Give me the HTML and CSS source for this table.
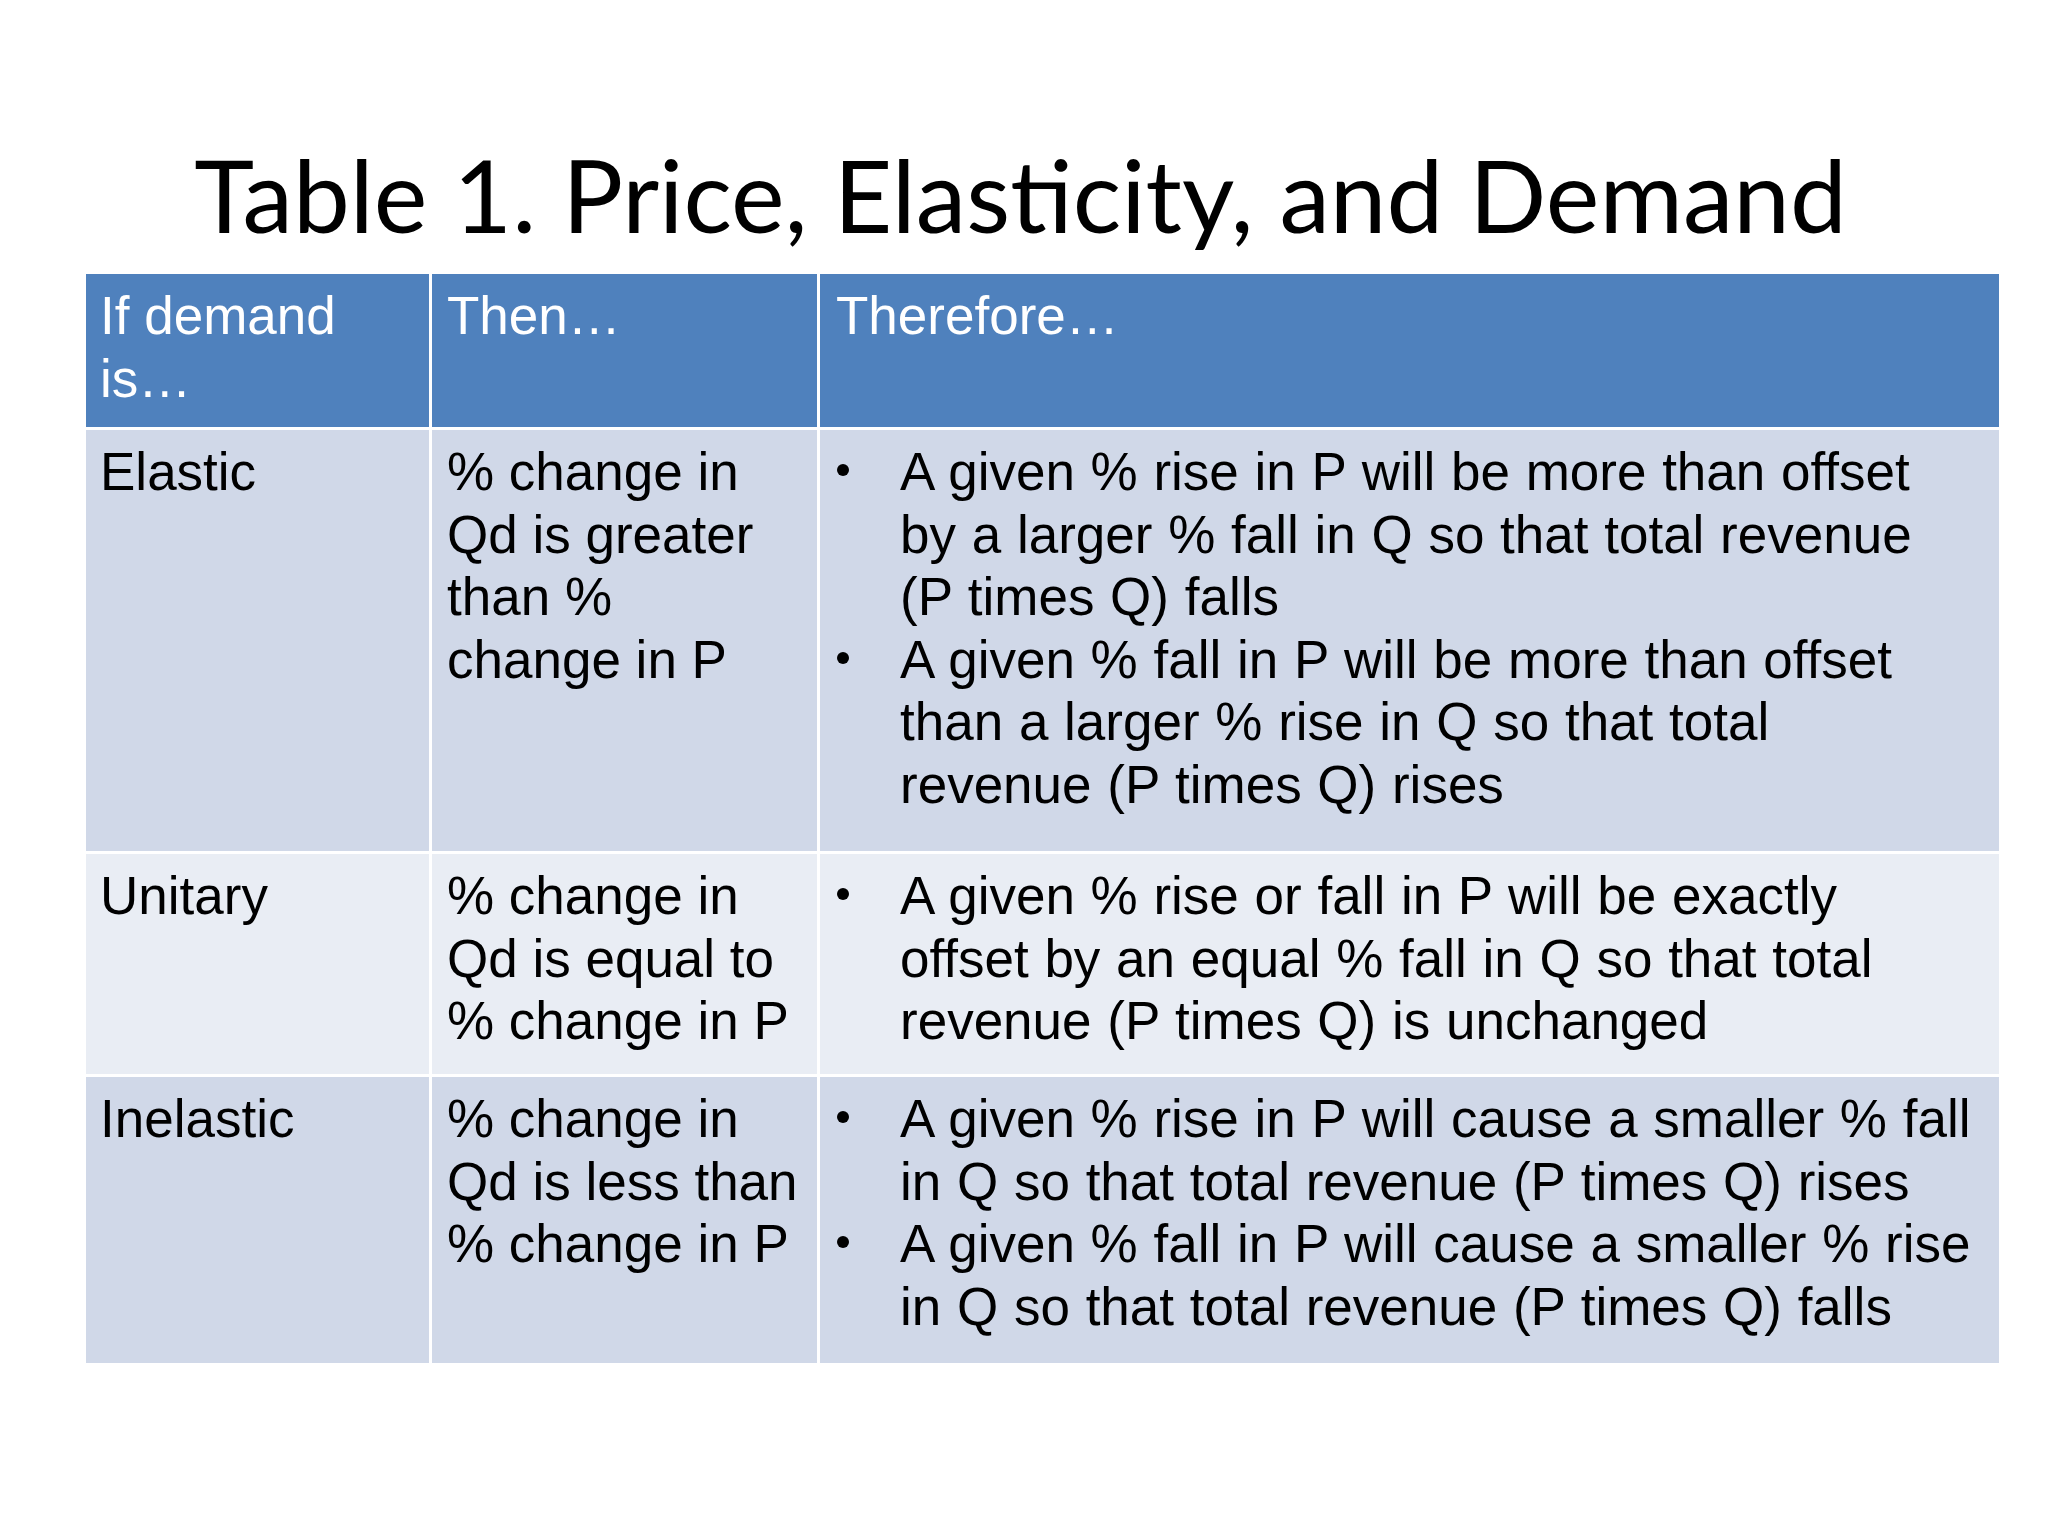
FILE: index.html
```html
<!DOCTYPE html>
<html lang="en">
<head>
<meta charset="utf-8">
<title>Table 1. Price, Elasticity, and Demand</title>
<link rel="stylesheet" href="styles.css">
</head>
<body>
<div class="slide">
  <h1 class="title">Table 1. Price, Elasticity, and Demand</h1>
  <div class="grid">
    <div class="cell head">If demand<br>is…</div>
    <div class="cell head c2">Then…</div>
    <div class="cell head c3">Therefore…</div>

    <div class="cell odd">Elastic</div>
    <div class="cell odd c2">% change in<br>Qd is greater<br>than %<br>change in P</div>
    <div class="cell odd c3">
      <ul class="bullets">
        <li>A given % rise in P will be more than offset<br>by a larger % fall in Q so that total revenue<br>(P times Q) falls</li>
        <li>A given % fall in P will be more than offset<br>than a larger % rise in Q so that total<br>revenue (P times Q) rises</li>
      </ul>
    </div>

    <div class="cell even">Unitary</div>
    <div class="cell even c2">% change in<br>Qd is equal to<br>% change in P</div>
    <div class="cell even c3">
      <ul class="bullets">
        <li>A given % rise or fall in P will be exactly<br>offset by an equal % fall in Q so that total<br>revenue (P times Q) is unchanged</li>
      </ul>
    </div>

    <div class="cell odd">Inelastic</div>
    <div class="cell odd c2">% change in<br>Qd is less than<br>% change in P</div>
    <div class="cell odd c3">
      <ul class="bullets">
        <li>A given % rise in P will cause a smaller % fall<br>in Q so that total revenue (P times Q) rises</li>
        <li>A given % fall in P will cause a smaller % rise<br>in Q so that total revenue (P times Q) falls</li>
      </ul>
    </div>
  </div>
</div>
</body>
</html>
```

FILE: styles.css
```css
html, body {
  margin: 0;
  padding: 0;
  background: #ffffff;
}

.slide {
  width: 2048px;
  height: 1536px;
  display: flex;
  flex-direction: column;
  background: #ffffff;
}

.title {
  margin: 0 0 18px 0;
  padding-top: 134px;
  height: 122px;
  font-family: Lato, "Liberation Sans", sans-serif;
  font-weight: 400;
  font-size: 101.5px;
  line-height: 121.8px;
  color: #000000;
  text-align: center;
  white-space: nowrap;
  padding-right: 7px;
}

.grid {
  margin-left: 86px;
  display: grid;
  grid-template-columns: 343px 385px 1179px;
  grid-template-rows: 153px 421px 220px 286px;
  gap: 3px;
  font-family: "Liberation Sans", Arial, sans-serif;
  font-size: 53px;
  line-height: 62.6px;
  color: #000000;
}

.cell {
  padding: 11px 0 0 14px;
  white-space: nowrap;
}

.c2 {
  padding-left: 15px;
}

.c3 {
  padding-left: 17px;
}

.head {
  background: #4f81bd;
  color: #ffffff;
}

.head.c3 {
  padding-left: 16px;
}

.odd {
  background: #d0d8e8;
}

.even {
  background: #e9edf4;
}

.bullets {
  list-style: none;
  margin: 0;
  padding: 0;
  word-spacing: 1px;
}

.bullets li {
  display: flex;
  align-items: flex-start;
}

.bullets li::before {
  content: "";
  flex: none;
  width: 12px;
  height: 12px;
  border-radius: 50%;
  background: #000000;
  margin-top: 23px;
  margin-right: 51px;
}
```
